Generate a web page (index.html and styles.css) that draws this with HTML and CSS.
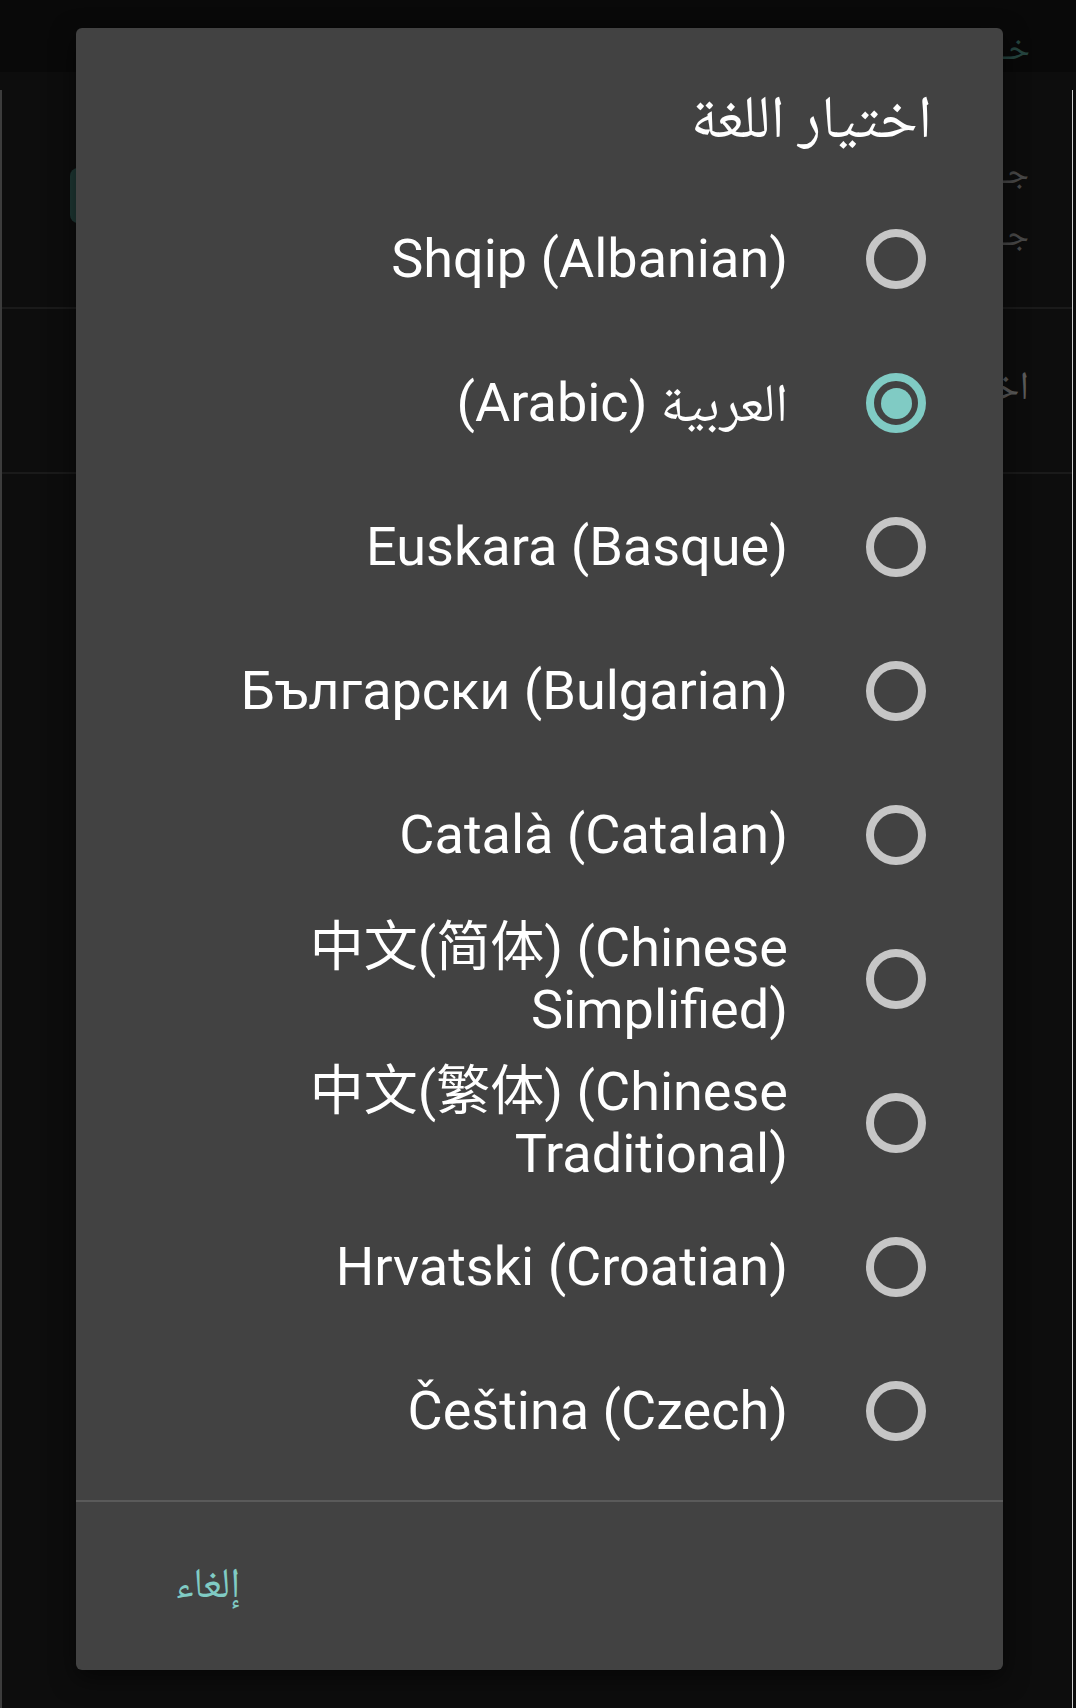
FILE: index.html
```html
<!DOCTYPE html>
<html lang="ar" dir="rtl">
<head>
<meta charset="utf-8">
<title>اختيار اللغة</title>
<link rel="stylesheet" href="styles.css">
</head>
<body>
<div class="screen">
  <div class="app">
    <header class="appbar"><span class="appbar-title">خـ</span></header>
    <div class="app-body">
      <section class="app-section first">
        <p class="app-line">جـ</p>
        <p class="app-line">جـ</p>
        <span class="app-btn"></span>
      </section>
      <section class="app-section second">
        <p class="app-line big">اخـ</p>
      </section>
    </div>
  </div>

  <div class="dialog" role="dialog" aria-labelledby="dlg-title">
    <h2 class="dialog-title" id="dlg-title">اختيار اللغة</h2>
    <ul class="options">
      <li class="option"><span class="radio"></span><span class="label" dir="auto">Shqip (Albanian)</span></li>
      <li class="option"><span class="radio checked"></span><span class="label" dir="auto">العربية (Arabic)</span></li>
      <li class="option"><span class="radio"></span><span class="label" dir="auto">Euskara (Basque)</span></li>
      <li class="option"><span class="radio"></span><span class="label" dir="auto">Български (Bulgarian)</span></li>
      <li class="option"><span class="radio"></span><span class="label" dir="auto">Català (Catalan)</span></li>
      <li class="option"><span class="radio"></span><span class="label" dir="auto">中文(简体) (Chinese Simplified)</span></li>
      <li class="option"><span class="radio"></span><span class="label" dir="auto">中文(繁体) (Chinese Traditional)</span></li>
      <li class="option"><span class="radio"></span><span class="label" dir="auto">Hrvatski (Croatian)</span></li>
      <li class="option"><span class="radio"></span><span class="label" dir="auto">Čeština (Czech)</span></li>
    </ul>
    <div class="dialog-actions">
      <button class="btn-text" type="button">إلغاء</button>
    </div>
  </div>
</div>
</body>
</html>
```

FILE: styles.css
```css
html, body {
  margin: 0;
  padding: 0;
  background: #0d0d0d;
}

.screen {
  position: relative;
  width: 1076px;
  height: 1708px;
  overflow: hidden;
  background: #0d0d0d;
  font-family: "Noto Naskh Arabic", "Noto Sans Arabic", "DejaVu Sans", sans-serif;
}

/* ---------- dimmed app behind the dialog (only its right strip is visible) ---------- */
.app {
  height: 100%;
  display: flex;
  flex-direction: column;
}

.appbar {
  height: 72px;
  box-sizing: border-box;
  flex: none;
  background: #090909;
  display: flex;
  align-items: flex-start;
  padding: 32px 46px 0 0;
}

.appbar-title {
  font-size: 34px;
  line-height: 40px;
  color: #25443f;
}

.app-body {
  flex: 1;
  border-left: 2px solid #3c3c3c;
  border-right: 1px solid #cfcfcf;
  margin-right: 3px;
  margin-top: 18px;
}

.app-section {
  position: relative;
  border-bottom: 2px solid #1a1a1a;
  padding-right: 43px;
  box-sizing: border-box;
}

.app-section.first {
  height: 219px;
  padding-top: 55px;
}

.app-section.second {
  height: 165px;
  padding-top: 50px;
}

.app-line {
  margin: 0;
  font-size: 34px;
  line-height: 62px;
  color: #474747;
  white-space: nowrap;
}

.app-line.big {
  font-size: 40px;
  color: #5a5a5a;
}

.app-btn {
  position: absolute;
  left: 68px;
  top: 78px;
  width: 60px;
  height: 55px;
  border-radius: 8px;
  background: #1f3835;
}

/* ---------- dialog ---------- */
.dialog {
  position: absolute;
  left: 76px;
  top: 28px;
  width: 927px;
  height: 1642px;
  background: #424242;
  border-radius: 6px;
  box-shadow: 0 8px 24px rgba(0, 0, 0, 0.55);
  display: flex;
  flex-direction: column;
  direction: rtl;
}

.dialog-title {
  margin: 0;
  height: 159px;
  box-sizing: border-box;
  padding: 56px 71px 0 0;
  font-weight: 400;
  font-size: 60px;
  line-height: 80px;
  color: #ffffff;
}

.options {
  list-style: none;
  margin: 0;
  padding: 0;
}

.option {
  height: 144px;
  display: flex;
  align-items: center;
  gap: 78px;
  padding: 0 77px;
}

.radio {
  flex: none;
  width: 60px;
  height: 60px;
  box-sizing: border-box;
  border: 8px solid #c6c6c6;
  border-radius: 50%;
  display: flex;
  align-items: center;
  justify-content: center;
}

.radio.checked {
  border-color: #80cbc4;
}

.radio.checked::after {
  content: "";
  width: 31px;
  height: 31px;
  border-radius: 50%;
  background: #80cbc4;
}

.label {
  flex: 1;
  text-align: right;
  font-family: Roboto, "Noto Sans CJK SC", "Noto Naskh Arabic", "DejaVu Sans", sans-serif;
  font-size: 54px;
  line-height: 62px;
  color: #ffffff;
}

.dialog-actions {
  flex: 1;
  margin-top: 17px;
  border-top: 2px solid #5a5a5a;
  display: flex;
  align-items: center;
  justify-content: flex-end;
  padding: 4px 99px 0;
}

.btn-text {
  border: 0;
  background: none;
  padding: 0;
  font-family: "Noto Naskh Arabic", "Noto Sans Arabic", "DejaVu Sans", sans-serif;
  font-size: 42px;
  color: #80cbc4;
}
```
